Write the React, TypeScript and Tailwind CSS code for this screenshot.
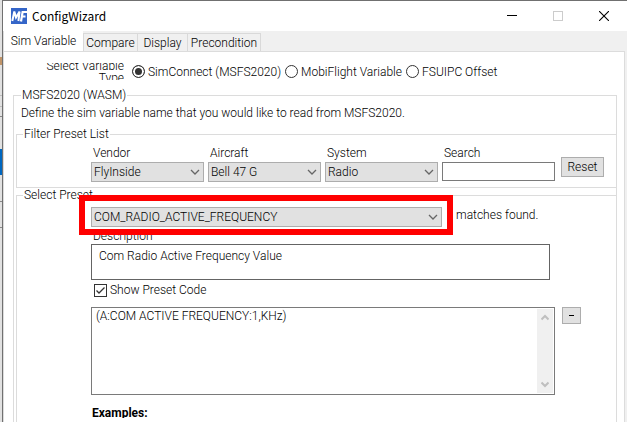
import { useState, type ReactNode } from "react";

function Chevron() {
  return (
    <svg className="pointer-events-none absolute top-1/2 right-1 -mt-1 h-2 w-2.5" viewBox="0 0 10 8" fill="none" stroke="#666" strokeWidth="1.3">
      <path d="M1 2 L5 6 L9 2" />
    </svg>
  );
}

function Combo({ id, value, label }: { id: string; value: string; label?: string }) {
  return (
    <div className="relative h-5">
      <select
        id={id}
        aria-label={label}
        defaultValue={value}
        className="block h-5 w-full appearance-none border border-[#adadad] bg-[#e1e1e1] pr-4 pl-0.5 leading-4 text-black"
      >
        <option>{value}</option>
      </select>
      <Chevron />
    </div>
  );
}

function Field({ id, label, children }: { id: string; label: string; children: ReactNode }) {
  return (
    <div className="flex flex-col gap-px">
      <label htmlFor={id} className="pl-0.5 leading-4">
        {label}
      </label>
      {children}
    </div>
  );
}

function TitleBar() {
  return (
    <header className="flex h-[30px] items-center bg-white">
      <svg className="ml-2 h-4 w-4" viewBox="0 0 16 16">
        <rect width="16" height="16" fill="#3465c8" />
        <path d="M1.3 13 L3.3 3.5 L5 9.5 L8.6 3.5 L7.4 13" fill="none" stroke="#fff" strokeWidth="2" />
        <path d="M10 13.5 L11.6 4 H16 M11 8.5 H14.5" fill="none" stroke="#fff" strokeWidth="2.2" />
      </svg>
      <h1 className="ml-[5px] flex-1 font-['Noto_Sans_CJK_JP',sans-serif] text-xs font-normal">ConfigWizard</h1>
      <button aria-label="Minimize" className="flex h-full w-[46px] items-center justify-center">
        <svg width="10" height="10" shapeRendering="crispEdges">
          <rect y="4" width="10" height="1" />
        </svg>
      </button>
      <button aria-label="Maximize" disabled className="flex h-full w-[46px] items-center justify-center">
        <svg width="10" height="10" fill="none" stroke="#ccc">
          <rect x="0.5" y="0.5" width="9" height="9" />
        </svg>
      </button>
      <button aria-label="Close" className="flex h-full w-[46px] items-center justify-center">
        <svg width="10" height="10" stroke="#000" strokeWidth="1.1">
          <path d="M0 0 L10 10 M10 0 L0 10" />
        </svg>
      </button>
    </header>
  );
}

const sources = ["SimConnect (MSFS2020)", "MobiFlight Variable", "FSUIPC Offset"];

export default function App() {
  const [source, setSource] = useState(sources[0]);
  return (
    <div className="flex min-h-screen bg-[#f0f0f0] font-[Roboto,'Noto_Sans_CJK_JP',sans-serif] text-xs font-light text-black">
      {/* sliver of the window behind */}
      <div className="flex w-0.5 flex-col bg-[#e1e1e1]">
        <div className="mt-[57px] h-2 bg-[#c09468]" />
        <div className="mt-[30px] h-3 border-y border-[#bdbdbd]" />
        <div className="mt-[9px] h-px bg-[#888]" />
        <div className="mt-8 h-[26px] bg-[#0067c0]" />
        <div className="mt-[26px] h-[27px] border-y border-[#888]" />
      </div>
      <div className="flex min-w-0 flex-1 flex-col border-t border-l border-[#707070]">
        <TitleBar />
        <nav role="tablist" className="flex h-5 items-end">
          <button role="tab" aria-selected="true" className="-mb-px h-[21px] w-20 border-l border-[#dcdcdc] bg-white pb-0.5 leading-4">
            Sim Variable
          </button>
          <button role="tab" aria-selected="false" className="h-[18px] w-[55px] border border-b-0 border-[#d9d9d9] leading-4">
            Compare
          </button>
          <button role="tab" aria-selected="false" className="h-[18px] w-[50px] border-t border-r border-[#d9d9d9] leading-4">
            Display
          </button>
          <button role="tab" aria-selected="false" className="h-[18px] w-[73px] border-t border-r border-[#d9d9d9] leading-4">
            Precondition
          </button>
          <span className="flex-1" />
        </nav>
        <main className="mr-0.5 flex flex-1 flex-col border border-b-0 border-[#dcdcdc] bg-white pr-[7px] pl-[9px]">
          <div role="radiogroup" aria-labelledby="type-label" className="mt-[11px] flex h-[17px] items-center">
            <div id="type-label" className="mr-2 flex h-[17px] w-[111px] flex-col justify-center overflow-hidden text-right leading-3">
              <span>Select Variable</span>
              <span>Type</span>
            </div>
            {sources.map((name) => (
              <label key={name} className="mr-1 flex items-center gap-[3px] whitespace-nowrap">
                <input
                  type="radio"
                  name="source"
                  checked={source === name}
                  onChange={() => setSource(name)}
                  className="h-[13px] w-[13px] appearance-none rounded-full border border-[#333] bg-white checked:bg-[#333] checked:shadow-[inset_0_0_0_2px_#fff]"
                />
                {name}
              </label>
            ))}
          </div>

          <fieldset className="mt-2 min-w-0 flex-1 border border-b-0 border-[#dcdcdc] pl-0.5">
            <legend className="ml-[5px] px-px leading-[14px]">MSFS2020 (WASM)</legend>
            <p className="mt-[3px] ml-[5px] leading-4">
              Define the sim variable name that you would like to read from MSFS2020.
            </p>

            <fieldset className="mt-1.5 min-w-0 border border-r-0 border-[#dcdcdc] pb-[5px]">
              <legend className="ml-1.5 px-px leading-[14px]">Filter Preset List</legend>
              <div className="mt-1 mr-3 ml-[74px] flex items-end">
                <div className="grid flex-1 grid-cols-4 gap-1">
                  <Field id="vendor" label="Vendor">
                    <Combo id="vendor" value="FlyInside" />
                  </Field>
                  <Field id="aircraft" label="Aircraft">
                    <Combo id="aircraft" value="Bell 47 G" />
                  </Field>
                  <Field id="system" label="System">
                    <Combo id="system" value="Radio" />
                  </Field>
                  <Field id="search" label="Search">
                    <input id="search" type="text" className="h-[19px] w-full border border-[#7a7a7a] bg-white px-1" />
                  </Field>
                </div>
                <button className="mb-[5px] ml-1.5 h-5 w-[43px] border border-[#adadad] bg-[#e1e1e1] leading-4">Reset</button>
              </div>
            </fieldset>

            <fieldset className="min-w-0 border border-r-0 border-b-0 border-[#dcdcdc] pb-1">
              <legend className="ml-1.5 px-px leading-[14px]">Select Preset</legend>
              <div className="mt-[5px] ml-[74px]">
                <div className="mr-[82px] flex items-start">
                  <div className="relative flex-1">
                    <Combo id="preset" label="Select Preset" value="COM_RADIO_ACTIVE_FREQUENCY" />
                    <div className="pointer-events-none absolute -top-3 -right-[11px] -bottom-2 -left-3 z-10 border-6 border-[#f00]" />
                  </div>
                  <span className="ml-3.5 w-[78px] leading-4 whitespace-nowrap">matches found.</span>
                </div>
                <label htmlFor="description" className="mt-px block pl-0.5 leading-4">
                  Description
                </label>
                <div className="mr-[66px]">
                  <textarea
                    id="description"
                    readOnly
                    defaultValue="Com Radio Active Frequency Value"
                    className="block h-9 w-full resize-none overflow-hidden border border-[#646464] bg-white px-[7px] py-[3px] leading-4"
                  />
                </div>
                <label className="mt-0.5 ml-[3px] flex h-4 items-center gap-[3px]">
                  <span className="relative h-[13px] w-[13px]">
                    <input type="checkbox" defaultChecked className="peer block h-[13px] w-[13px] appearance-none border border-[#333] bg-white" />
                    <svg className="pointer-events-none absolute inset-0 hidden peer-checked:block" viewBox="0 0 13 13" fill="none" stroke="#333" strokeWidth="1.3">
                      <path d="M2.5 6.5 L5 9 L10.5 3.5" />
                    </svg>
                  </span>
                  Show Preset Code
                </label>
                <div className="mt-[9px] mr-[35px] flex items-start gap-[7px]">
                  <div className="flex h-[88px] flex-1 border border-[#7a7a7a] bg-white p-px">
                    <textarea
                      aria-label="Preset code"
                      defaultValue="(A:COM ACTIVE FREQUENCY:1,KHz)"
                      className="block h-full flex-1 resize-none overflow-hidden pl-[3px] leading-[14px]"
                    />
                    <div className="flex w-4 flex-col items-center justify-between bg-[#f0f0f0] py-[5px]">
                      <svg width="8" height="7" fill="none" stroke="#bfbfbf" strokeWidth="2">
                        <path d="M0.5 5.5 L4 2 L7.5 5.5" />
                      </svg>
                      <svg width="8" height="7" fill="none" stroke="#bfbfbf" strokeWidth="2">
                        <path d="M0.5 1.5 L4 5 L7.5 1.5" />
                      </svg>
                    </div>
                  </div>
                  <button aria-label="Hide preset code" className="flex h-[17px] w-[19px] items-center justify-center border border-[#adadad] bg-[#e1e1e1]">
                    <span className="h-px w-[5px] bg-black" />
                  </button>
                </div>
                <h2 className="mt-2.5 h-[13px] overflow-hidden pl-px leading-4 font-bold">Examples:</h2>
              </div>
            </fieldset>
          </fieldset>
        </main>
      </div>
    </div>
  );
}
